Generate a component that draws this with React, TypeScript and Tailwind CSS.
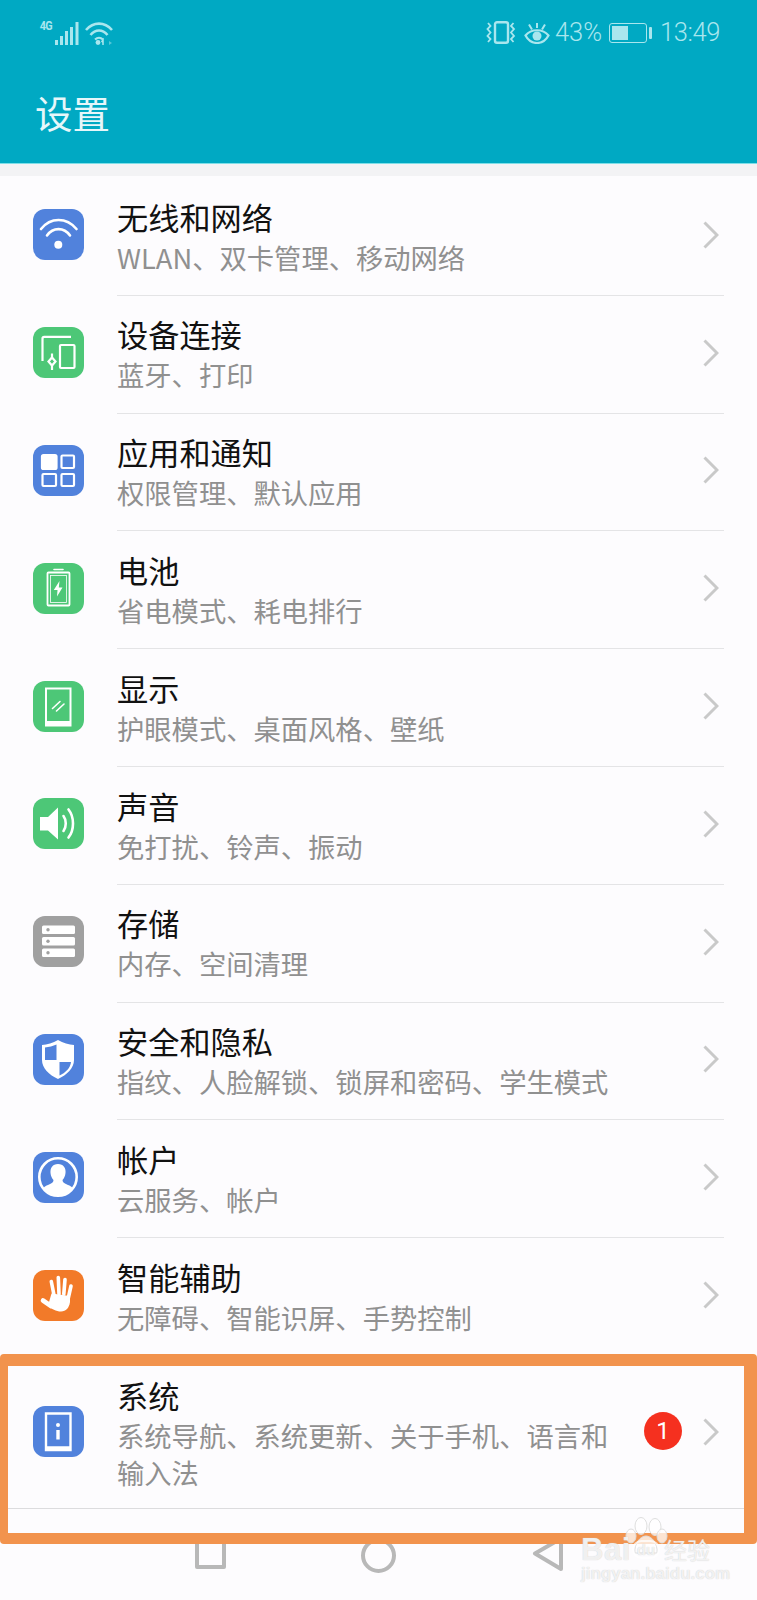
import React from 'react';

const BLUE = 'bg-[#5182dc]';
const GREEN = 'bg-[#4dc777]';

const WifiGlyph = () => (
  <svg viewBox="0 0 51 51" className="w-full h-full" fill="none" stroke="#fff" strokeLinecap="round">
    <path d="M8 20C17.5 8 33.5 8 43.5 20" strokeWidth="2.6" />
    <path d="M14 26.5C20 18 31 18 37 26.5" strokeWidth="2.6" />
    <circle cx="25.3" cy="35.7" r="4" fill="#fff" stroke="none" />
  </svg>
);

const DevicesGlyph = () => (
  <svg viewBox="0 0 51 51" className="w-full h-full" fill="none" stroke="#fff" strokeWidth="2.2">
    <path d="M9.5 34V11.5C9.5 10.5 10.2 9.8 11.2 9.8H38" />
    <rect x="27" y="18" width="14.5" height="23" rx="1" />
    <path d="M19 26.5V43" />
    <path d="M19 30.5L22.5 34.5L19 38.5L15.5 34.5Z" fill="#4dc777" />
  </svg>
);

const AppsGlyph = () => (
  <svg viewBox="0 0 51 51" className="w-full h-full" fill="none" stroke="#fff" strokeWidth="2.2">
    <rect x="9" y="10" width="14.5" height="14" rx="1.5" fill="#fff" />
    <rect x="28.5" y="10.5" width="12.5" height="12.5" rx="1" />
    <rect x="9.5" y="29" width="13.5" height="12" rx="1" />
    <rect x="28.5" y="29" width="12.5" height="12" rx="1" />
  </svg>
);

const BatteryGlyph = () => (
  <svg viewBox="0 0 51 51" className="w-full h-full" fill="none" stroke="#fff">
    <path d="M21 6.5H30" strokeWidth="1.6" strokeLinecap="round" />
    <rect x="14.5" y="9.5" width="22" height="33" rx="1" strokeWidth="1.8" />
    <rect x="17.5" y="12.5" width="16" height="27" strokeWidth="0.8" />
    <path d="M26.5 18L20.8 27H24.5L24 33.5L29.5 24.5H25.8Z" fill="#fff" stroke="none" />
  </svg>
);

const DisplayGlyph = () => (
  <svg viewBox="0 0 51 51" className="w-full h-full" fill="none" stroke="#fff">
    <path d="M13 7.5H37.5V44.5H13Z" strokeWidth="2" />
    <path d="M13 42.5H37.5" strokeWidth="5" />
    <path d="M19.5 27.5L27 20.5M23.5 30L31 23" strokeWidth="1.6" strokeLinecap="round" />
  </svg>
);

const SoundGlyph = () => (
  <svg viewBox="0 0 51 51" className="w-full h-full" fill="none" stroke="#fff">
    <path d="M7 19H15L25 9.5V41.5L15 32.5H7Z" fill="#fff" stroke="none" />
    <path d="M30.5 18C33.5 22 33.5 29 30.5 33" strokeWidth="2.6" strokeLinecap="round" />
    <path d="M35.5 11.5C41.5 19 41.5 32 35.5 39.5" strokeWidth="2.6" strokeLinecap="round" />
  </svg>
);

const StorageGlyph = () => (
  <svg viewBox="0 0 51 51" className="w-full h-full">
    <rect x="9" y="9.5" width="33" height="8.5" rx="1.5" fill="#fff" />
    <rect x="9" y="21" width="33" height="8.5" rx="1.5" fill="#fff" />
    <rect x="9" y="32.5" width="33" height="8.5" rx="1.5" fill="#fff" />
    <circle cx="15" cy="13.7" r="1.7" fill="#a0a0a0" />
    <circle cx="15" cy="25.2" r="1.7" fill="#a0a0a0" />
    <circle cx="15" cy="36.7" r="1.7" fill="#a0a0a0" />
  </svg>
);

const ShieldGlyph = () => (
  <svg viewBox="0 0 51 51" className="w-full h-full">
    <path d="M25 6C30 9 36 10.5 41 11V26C41 34 34 41 25 45C16 41 9 34 9 26V11C14 10.5 20 9 25 6Z" fill="#fff" />
    <path d="M23.5 10.5V26H12V13.5C16 13 20 12 23.5 10.5Z" fill="#5182dc" />
    <path d="M26.5 28H38C37.5 33.5 33 38.5 26.5 41.5Z" fill="#5182dc" />
  </svg>
);

const AccountGlyph = () => (
  <svg viewBox="0 0 51 51" className="w-full h-full">
    <circle cx="25" cy="25" r="18.7" fill="none" stroke="#fff" strokeWidth="2.6" />
    <path d="M25 12C30.5 12 33 16 32.5 21C32.2 24 31 26.5 29.5 28C29.5 30 31 31.5 35 33C37 33.7 38.5 34.5 39.5 36C36 40.5 31 43 25 43C19 43 14 40.5 10.5 36C11.5 34.5 13 33.7 15 33C19 31.5 20.5 30 20.5 28C19 26.5 17.8 24 17.5 21C17 16 19.5 12 25 12Z" fill="#fff" />
  </svg>
);

const HandGlyph = () => (
  <svg viewBox="0 0 51 51" className="w-full h-full" fill="none" stroke="#fff" strokeLinecap="round">
    <path d="M18.3 11.5L21 25M25.3 7.5L26 24M32 9.5L30.8 24M38 16L35.3 28" strokeWidth="3.6" />
    <path d="M10 30.5L18 36" strokeWidth="4.6" />
    <path d="M18.5 23.5L37 26L37 32C36 38 33 41.5 28 41.5C23 41.5 18.5 39 15 35.5Z" fill="#fff" stroke="none" />
  </svg>
);

const SystemGlyph = () => (
  <svg viewBox="0 0 51 51" className="w-full h-full" fill="none" stroke="#fff">
    <path d="M13 7.5H37.5V44H13Z" strokeWidth="2.4" />
    <path d="M13 42.5H37.5" strokeWidth="4.5" />
    <circle cx="25" cy="19" r="2" fill="#fff" stroke="none" />
    <path d="M25 24V33.5" strokeWidth="3.4" />
  </svg>
);

const Chevron = () => (
  <svg width="16" height="28" viewBox="0 0 16 28" fill="none" stroke="#c9c9c9" strokeWidth="3" className="shrink-0 mt-[1px]">
    <path d="M1.5 1.5L14 14L1.5 26.5" />
  </svg>
);

type Row = { title: string; sub: string; color: string; icon: React.ReactNode };

const ROWS: Row[] = [
  { title: '无线和网络', sub: 'WLAN、双卡管理、移动网络', color: BLUE, icon: <WifiGlyph /> },
  { title: '设备连接', sub: '蓝牙、打印', color: GREEN, icon: <DevicesGlyph /> },
  { title: '应用和通知', sub: '权限管理、默认应用', color: BLUE, icon: <AppsGlyph /> },
  { title: '电池', sub: '省电模式、耗电排行', color: GREEN, icon: <BatteryGlyph /> },
  { title: '显示', sub: '护眼模式、桌面风格、壁纸', color: GREEN, icon: <DisplayGlyph /> },
  { title: '声音', sub: '免打扰、铃声、振动', color: GREEN, icon: <SoundGlyph /> },
  { title: '存储', sub: '内存、空间清理', color: 'bg-[#a0a0a0]', icon: <StorageGlyph /> },
  { title: '安全和隐私', sub: '指纹、人脸解锁、锁屏和密码、学生模式', color: BLUE, icon: <ShieldGlyph /> },
  { title: '帐户', sub: '云服务、帐户', color: BLUE, icon: <AccountGlyph /> },
  { title: '智能辅助', sub: '无障碍、智能识屏、手势控制', color: 'bg-[#f27a29]', icon: <HandGlyph /> },
];

const IconTile = ({ color, children }: { color: string; children: React.ReactNode }) => (
  <div className={`w-[51px] h-[51px] rounded-[12px] shrink-0 ${color}`}>{children}</div>
);

const RowText = ({ title, sub }: { title: string; sub: string }) => (
  <div className="w-[510px] pt-[2px]">
    <div className="text-[31.2px] leading-[42px] mb-[1px] text-[#111]">{title}</div>
    <div className="text-[27.3px] leading-[36.5px] text-[#909090]">{sub}</div>
  </div>
);

const StatusBar = () => (
  <div className="flex items-center h-[64px] pl-[39px] pr-[37px] pt-[1px] text-[#a9e6ee]">
    <span className="text-[12px] leading-none self-start mt-[19px] font-bold tracking-[-0.6px] scale-x-90 font-['Roboto',sans-serif]">4G</span>
    <svg width="24" height="23" viewBox="0 0 24 23" fill="#a9e6ee" className="ml-[2px] mt-[1px]">
      <rect x="0" y="18" width="3" height="5" />
      <rect x="5" y="14" width="3" height="9" />
      <rect x="10" y="9" width="3" height="14" />
      <rect x="15" y="5" width="3" height="18" />
      <rect x="20.5" y="0" width="3" height="23" />
    </svg>
    <svg width="29" height="23" viewBox="0 0 29 23" fill="none" stroke="#a9e6ee" strokeWidth="2.6" className="ml-[6px] mt-[1px]">
      <path d="M1 8C8.5 -.5 19.5 -.5 27 8" />
      <path d="M5.5 13C10.5 7 17.5 7 22.5 13" />
      <path d="M10 17.5C12.5 15 15.5 15 18 17.5" strokeWidth="2" />
      <circle cx="13" cy="20.5" r="2.4" fill="#a9e6ee" stroke="none" />
      <path d="M18 23V18L16.5 20" strokeWidth="1.5" />
      <path d="M24 19L27 21L24 23Z" fill="#a9e6ee" stroke="none" opacity="0.5" />
    </svg>
    <div className="flex-1" />
    <svg width="30" height="23" viewBox="0 0 30 23" fill="none" stroke="#a9e6ee" strokeWidth="2.4">
      <rect x="9" y="1.2" width="13" height="20.6" rx="2" />
      <path d="M2 2L4.5 5L1.5 8L4.5 11.5L1.5 15L4.5 18L2 21" strokeWidth="1.8" />
      <path d="M27.5 2L25 5L28 8L25 11.5L28 15L25 18L27.5 21" strokeWidth="1.8" />
    </svg>
    <svg width="26" height="22" viewBox="0 0 26 22" fill="none" stroke="#a9e6ee" strokeWidth="2.2" className="ml-[8px]">
      <path d="M1.5 13.5C7 6.5 19 6.5 24.5 13.5C19 23.5 7 23.5 1.5 13.5Z" />
      <circle cx="13" cy="14" r="4.5" fill="#a9e6ee" stroke="none" />
      <path d="M13 1V6M5 2.5L8 7.5M21 2.5L18 7.5" strokeWidth="2" />
    </svg>
    <span className="ml-[5px] text-[25.5px] leading-none font-['Roboto',sans-serif] font-light">43%</span>
    <div className="ml-[7px] w-[38px] h-[20px] rounded-[3px] border border-[#a9e6ee] p-[2px] flex">
      <div className="w-[16px] bg-[#a9e6ee]" />
    </div>
    <div className="ml-[2px] w-[3px] h-[12px] bg-[#a9e6ee] rounded-[1px]" />
    <span className="ml-[8px] text-[25.5px] leading-none font-light tracking-[-0.4px] font-['Roboto',sans-serif]">13:49</span>
  </div>
);

const NavBar = () => (
  <div className="flex items-start h-[91px] pt-[27px] pl-[195px]">
    <div className="w-[31px] h-[33px] border-[4px] border-[#b8b8b8] rounded-[2px]" />
    <div className="ml-[135px] mt-[2px] w-[35px] h-[35px] border-[4px] border-[#b8b8b8] rounded-full" />
    <svg width="32" height="36" viewBox="0 0 32 36" fill="none" stroke="#b8b8b8" strokeWidth="4" strokeLinejoin="round" className="ml-[136px]">
      <path d="M29 2.5V33L3 17.5Z" />
    </svg>
  </div>
);

// annotation frame and watermark added on top of the original screenshot
const Watermark = () => (
  <div className="absolute left-[581px] top-[1516px] w-[140px] text-white/75 font-['Liberation_Sans',sans-serif]">
    <svg width="46" height="38" viewBox="0 0 46 38" fill="#fff" fillOpacity="0.75" stroke="#dedede" strokeWidth="1" className="ml-[43px]">
      <ellipse cx="17" cy="10" rx="6" ry="8.5" />
      <ellipse cx="31" cy="11" rx="6" ry="8.5" />
      <ellipse cx="7" cy="20" rx="5" ry="7" />
      <ellipse cx="38" cy="20" rx="5" ry="7" />
      <path d="M22 20C28 20 34 28 33 37H11C10 28 16 20 22 20Z" />
    </svg>
    <div className="flex items-center h-[22px] -mt-[16px] [text-shadow:0_0_1px_#c4c4c4]">
      <span className="text-[31px] leading-none font-bold tracking-[0.5px]">Bai</span>
      <span className="ml-[1px] px-[3px] h-[19px] rounded-full border-[2px] border-white/75 text-[15px] leading-[15px] font-bold">du</span>
      <span className="ml-[4px] text-[23px] leading-none font-['Noto_Sans_CJK_SC',sans-serif]">经验</span>
    </div>
    <div className="mt-[4px] text-[17px] leading-[20px] font-bold whitespace-nowrap [text-shadow:0_0_1px_#c4c4c4]">jingyan.baidu.com</div>
  </div>
);

const App: React.FC = () => {
  return (
    <div className="relative w-[757px] h-[1600px] overflow-hidden bg-[#fdfcfe] font-['Noto_Sans_CJK_SC','Noto_Sans',sans-serif]">
      <header className="h-[164px] bg-[#00a9c3] border-b border-[#7fdfe8]">
        <StatusBar />
        <div className="pl-[35px] pt-[20px] text-[37.5px] leading-[56px] text-[#e6f7fa]">设置</div>
      </header>
      <div className="h-[12px] bg-[#f3f3f5]" />

      <div className="pt-[2px]">
        {ROWS.map(row => (
          <div key={row.title} className="flex items-center h-[117.8px] pl-[33px]">
            <div className="-mt-[4px]">
              <IconTile color={row.color}>{row.icon}</IconTile>
            </div>
            <div className="ml-[33px] mr-[33px] flex-1 h-full flex items-center justify-between pr-[5px] pb-[4px] border-b border-[#e4e4e6]">
              <RowText title={row.title} sub={row.sub} />
              <Chevron />
            </div>
          </div>
        ))}

        <div className="flex items-center h-[153.5px] pl-[33px] pr-[38px] pb-[2px] border-b border-[#dcdcde]">
          <IconTile color={BLUE}>
            <SystemGlyph />
          </IconTile>
          <div className="ml-[33px]">
            <RowText title="系统" sub="系统导航、系统更新、关于手机、语言和输入法" />
          </div>
          <div className="ml-auto flex items-center">
            <div className="w-[38px] h-[38px] rounded-full bg-[#f5301f] text-white text-[24px] leading-[38px] text-center font-['Roboto',sans-serif]">1</div>
            <div className="ml-[21px] flex">
              <Chevron />
            </div>
          </div>
        </div>
      </div>

      <NavBar />

      <div className="absolute left-0 top-[1354px] w-[757px] h-[190px] border-t-[12px] border-b-[11px] border-l-[8px] border-r-[13px] border-[#f2934d] rounded-[4px]" />
      <Watermark />
    </div>
  );
};

export default App;
